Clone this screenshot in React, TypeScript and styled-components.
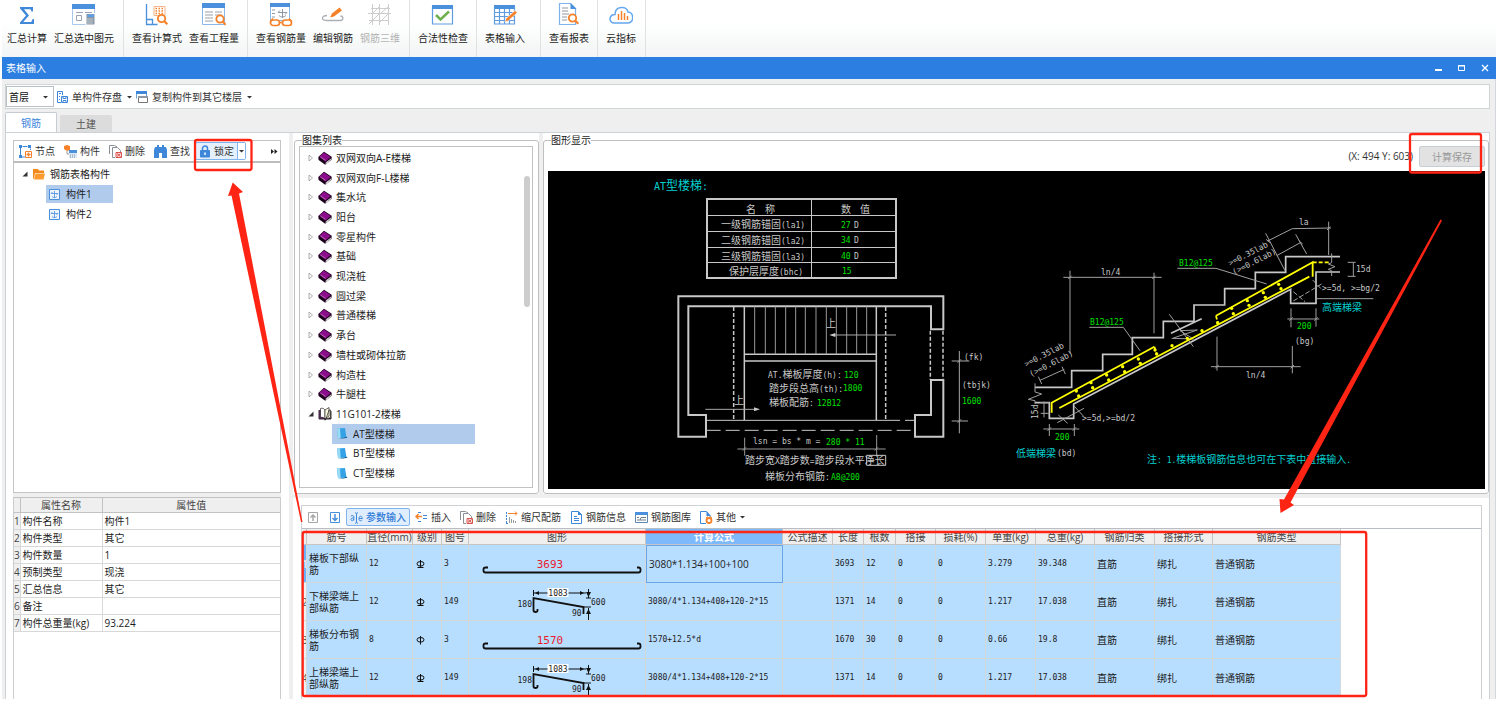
import React from 'react';
import styled, { createGlobalStyle } from 'styled-components';

const GlobalStyle = createGlobalStyle`
  * { box-sizing: border-box; }
  body {
    margin: 0;
    background: #fff;
    color: #1c1c1c;
    font: 10px/14px "Open Sans", "Noto Sans CJK SC", sans-serif;
  }
  button, select { font: inherit; color: inherit; }
  svg { display: block; flex: none; }
`;

const BLUE = '#4a90dc';
const ORANGE = '#f5822a';
const RED = '#ff2414';

const Page_ = styled.div`
  position: relative;
  padding-left: 2px;
`;

/* ---------- ribbon ---------- */
const Ribbon = styled.div`
  display: flex;
  height: 57px;
  background: linear-gradient(#fff 40%, #f2f5f5);
`;
const RibbonGroup = styled.div<{ $start?: number; $end?: number }>`
  display: flex;
  gap: 7px;
  padding: 3px ${p => p.$end ?? 8}px 0 ${p => p.$start ?? 8}px;
  border-right: 1px solid #dfe2e2;
`;
const RibbonButton = styled.button`
  display: flex;
  flex-direction: column;
  align-items: center;
  gap: 4px;
  padding: 0;
  border: 0;
  background: none;
  line-height: 14px;
  color: #1c1c1c;
  white-space: nowrap;
  &:disabled { color: #b4b4b4; }
`;

/* ---------- window ---------- */
const TitleBar = styled.header`
  display: flex;
  align-items: center;
  justify-content: space-between;
  height: 22px;
  padding: 0 4px;
  background: #2c7ee0;
  color: #fff;
`;
const WindowButtons = styled.div`
  display: flex;
  gap: 8px;
`;
const WindowButton = styled.button`
  padding: 0;
  border: 0;
  background: none;
`;
const Body = styled.main`
  padding: 5px 5px 0 3px;
  background: #efefef;
  border-right: 1px solid #d3d6da;
`;
const TopBar = styled.div`
  display: flex;
  align-items: center;
  gap: 3px;
  height: 25px;
  background: #fff;
  border: 1px solid #cfd4d4;
`;
const SelectBox = styled.label`
  display: flex;
  align-items: center;
  height: 21px;
  width: 48px;
  padding-right: 4px;
  border: 1px solid #b9bfc4;
  background: #fff;
`;
const Select = styled.select`
  flex: 1;
  min-width: 0;
  appearance: none;
  border: 0;
  background: none;
  padding: 0 0 0 2px;
  outline: 0;
  color: #111;
`;
const MenuButton = styled.button`
  display: flex;
  align-items: center;
  gap: 4px;
  padding: 0;
  border: 0;
  background: none;
  color: #333;
`;

const Tabs = styled.div`
  display: flex;
  align-items: flex-end;
  gap: 3px;
  padding-top: 3px;
`;
const Tab = styled.button<{ $active?: boolean }>`
  width: 52px;
  height: ${p => (p.$active ? 20 : 17)}px;
  padding: 0;
  border: ${p => (p.$active ? '1px solid #c6ccd2' : '0')};
  border-bottom: 0;
  border-radius: 2px 2px 0 0;
  background: ${p => (p.$active ? '#fff' : '#dcdcdc')};
  color: ${p => (p.$active ? '#3c86dc' : '#555')};
`;
const TabPanel = styled.section`
  display: flex;
  border: 1px solid #cdd2d6;
  border-bottom: 0;
  background: #fff;
`;

/* ---------- left pane ---------- */
const LeftPane = styled.aside`
  flex: none;
  display: flex;
  flex-direction: column;
  width: 283px;
  padding: 7px 8px 0 7px;
`;
const LeftBar = styled.div`
  display: flex;
  align-items: center;
  gap: 1px;
  height: 23px;
  padding: 0 2px 0 1px;
  border: 1px solid #c4c4c4;
  border-bottom: 2px solid #bdbdbd;
`;
const ToolButton = styled.button<{ $active?: boolean }>`
  display: flex;
  align-items: center;
  gap: 3px;
  height: 18px;
  padding: 0 3px;
  border: 1px solid ${p => (p.$active ? '#7fb4f0' : 'transparent')};
  border-radius: 2px;
  background: ${p => (p.$active ? '#dfedfc' : 'none')};
  color: ${p => (p.$active ? '#2f7bd8' : '#333')};
  font-weight: ${p => (p.$active ? 500 : 400)};
  white-space: nowrap;
`;
const SplitButton = styled.div`
  display: flex;
  align-items: stretch;
  height: 18px;
  border: 1px solid #7fb4f0;
  border-radius: 2px;
  background: #e4f0fd;
`;
const SplitMain = styled.button`
  display: flex;
  align-items: center;
  gap: 3px;
  padding: 0 3px;
  border: 0;
  background: none;
  color: #333;
`;
const SplitArrow = styled.button`
  display: flex;
  align-items: center;
  padding: 0;
  border: 0;
  border-left: 1px solid #7fb4f0;
  background: #fff;
`;
const More = styled.button`
  margin-left: auto;
  padding: 0;
  border: 0;
  background: none;
`;
const ComponentTree = styled.ul`
  height: 330px;
  margin: 0;
  padding: 1px 0 0;
  list-style: none;
  border: 1px solid #c4c4c4;
  border-top: 0;
`;
const TreeRow = styled.li`
  display: flex;
  align-items: center;
  gap: 5px;
  height: 20px;
  padding-left: 8px;
`;
const TreeLeaf = styled.li`
  display: flex;
  align-items: center;
  height: 20px;
  padding-left: 32px;
`;
const LeafLabel = styled.span<{ $selected?: boolean }>`
  display: flex;
  align-items: center;
  gap: 6px;
  width: 67px;
  height: 18px;
  padding-left: 3px;
  background: ${p => (p.$selected ? '#b1cbed' : 'none')};
`;
const PropertyArea = styled.div`
  flex: 1;
  border: 1px solid #c9cdd0;
  border-width: 0 1px;
`;
const HSplit = styled.div`
  height: 4px;
  flex: none;
  background: #efefef;
`;
const VSplit = styled.div`
  width: 4px;
  flex: none;
  background: #efefef;
`;
const PropertyTable = styled.table`
  width: 100%;
  table-layout: fixed;
  border-collapse: collapse;
  th, td { padding: 0; overflow: hidden; white-space: nowrap; font-weight: 400; border: 1px solid #d8d8d8; }
  tr > :first-child { border-left: 0; }
  tr > :last-child { border-right: 0; }
  thead th { height: 15px; line-height: 13px; background: #efefef; border-color: #c2c2c2; color: #444; }
  tbody th { background: #efefef; color: #444; line-height: 14px; }
  td { height: 17px; padding-left: 2px; line-height: 14px; }
`;

/* ---------- right pane ---------- */
const RightPane = styled.div`
  flex: 1;
  min-width: 0;
  display: flex;
  flex-direction: column;
`;
const Upper = styled.div`
  display: flex;
  padding-left: 1px;
`;
const Group = styled.fieldset<{ $grow?: boolean }>`
  display: flex;
  flex-direction: column;
  flex: ${p => (p.$grow ? '1' : '0 0 245px')};
  min-width: 0;
  margin: 1px 0 0;
  padding: ${p => (p.$grow ? '0 3px 4px 4px' : '0 5px 5px 4px')};
  border: 1px solid #bfbfbf;
  border-radius: 3px;
`;
const Legend = styled.legend`
  margin-left: 3px;
  padding: 0;
  line-height: 12px;
  height: 12px;
`;
const AtlasBox = styled.div`
  flex: 1;
  display: flex;
  justify-content: space-between;
  padding: 1px 2px 4px 8px;
  border: 1px solid #c2c2c2;
`;
const Atlas = styled.ul`
  flex: 1;
  display: grid;
  grid-auto-rows: 1fr;
  margin: 0;
  padding: 0;
  list-style: none;
`;
const AtlasRow = styled.li`
  display: flex;
  align-items: center;
  gap: 4px;
`;
const AtlasLeaf = styled.li<{ $selected?: boolean }>`
  display: flex;
  align-items: center;
  gap: 5px;
  width: 143px;
  margin-left: 24px;
  padding-left: 4px;
  background: ${p => (p.$selected ? '#b1cbed' : 'none')};
`;
const ScrollThumb = styled.div`
  width: 6px;
  height: 131px;
  margin-top: 28px;
  border-radius: 3px;
  background: #cdcdcd;
`;
const DrawingHead = styled.div`
  display: flex;
  justify-content: flex-end;
  align-items: flex-start;
  gap: 6px;
  height: 25px;
  line-height: 21px;
  color: #333;
`;
const SaveButton = styled.button`
  width: 66px;
  height: 21px;
  padding: 0;
  border: 1px solid #c8ced6;
  border-radius: 2px;
  background: #e2e2e2;
  color: #999;
`;
const CanvasArea = styled.div`
  flex: 1;
  overflow: hidden;
  background: #000;
`;
const Cad = styled.svg`
  path { vector-effect: non-scaling-stroke; fill: none; }
  text { font: 10px "Noto Sans CJK SC", sans-serif; white-space: pre; }
  .mono { font: 8px "DejaVu Sans Mono", monospace; }
  .head { font-size: 12px; }
  .head .mono { font-size: 10px; }
`;

const Lower = styled.section`
  padding: 7px 7px 0 8px;
`;
const RebarBox = styled.div`
  border: 1px solid #cfd2d4;
  border-bottom: 0;
  padding-bottom: 2px;
`;
const RebarBar = styled.div`
  display: flex;
  align-items: center;
  gap: 1px;
  height: 23px;
  border-bottom: 1px solid #b9bec4;
`;
const RebarTable = styled.table`
  table-layout: fixed;
  width: 1039px;
  border-collapse: separate;
  border-spacing: 0;
  th, td {
    padding: 0 0 0 2px;
    overflow: hidden;
    text-align: left;
    border: 0 solid #d3d8dc;
    border-width: 0 1px 1px 0;
    font-weight: 400;
  }
  thead th {
    height: 16px;
    padding: 1px 0 0;
    line-height: 14px;
    text-align: center;
    white-space: nowrap;
    background: #efefef;
    border-color: #c6c6c6;
    color: #444;
  }
  tbody tr { height: 38px; background: #b7ddff; }
`;
const RowHead = styled.th<{ $active?: boolean }>`
  && {
    padding: 0;
    background: ${p => (p.$active ? '#6fb0fa' : '#efefef')};
    color: ${p => (p.$active ? '#fff' : '#555')};
  }
`;
const ActiveHead = styled.th`
  && { background: #7db9fb; color: #fff; font-weight: 700; }
`;
const NumCell = styled.td`
  font: 8px/14px "DejaVu Sans Mono", monospace;
  white-space: nowrap;
`;
const NameCell = styled.td`
  line-height: 12px;
`;
const EditCell = styled.td`
  && { border: 1px solid #6aa5e8; }
`;
const ShapeCell = styled.td`
  && { padding: 0; }
`;
const Shape = styled.svg`
  text { font: 8px "DejaVu Sans Mono", monospace; fill: #222; }
  .len { font: 11px "DejaVu Sans Mono", monospace; fill: #e8202c; }
`;
const Annotations = styled.svg`
  position: absolute;
  top: 0;
  left: 0;
  pointer-events: none;
`;

/* ---------- icons ---------- */
const Arrow = () => (
  <svg width="7" height="8" viewBox="0 0 7 8"><path d="M1 3h5L3.500 5.500z" fill="#333" /></svg>
);

const Magnifier = ({ x = 0, y = 0 }) => (
  <g transform={`translate(${x} ${y})`} stroke={ORANGE} fill="#fff">
    <circle cx="4.500" cy="4.500" r="3.700" strokeWidth="1.800" />
    <path d="M7.300 7.300l3 3" strokeWidth="2.200" />
  </g>
);

const ribbonIcons: Record<string, React.ReactNode> = {
  sum: <path d="M5 4h13v4.500h-1.500l-1-2.300H9l5 6.200-5.800 6.500h8l1.500-3H19V21H5v-1.600l6-7-6-7z" fill="#4288d8" />,
  sumSel: (
    <g fill="none" stroke="#9aa5b1">
      <path d="M.5 6v15.500h22V6" fill="#fff" stroke="#a9c8ec" />
      <path d="M0 1h23v5H0z" fill={BLUE} stroke="none" />
      <path d="M4.500 12.500h5v5h-5zM4 9.500h7M13 9.500h7" />
      <path d="M14 10.500h9V22h-9z" fill="#8996a5" stroke="#fff" />
      <path d="M15.500 11.500h6.500v2.500h-6.500z" fill="#5aa0e8" stroke="none" />
      <path d="M15.500 16h6M15.500 18h6M15.500 20h6" stroke="#fff" strokeDasharray="1 1" />
    </g>
  ),
  viewFormula: (
    <g fill="none">
      <path d="M1.500 1v14.500M1.500 16.500h6v5h-6zM7.500 21.500h5M1.500 15.500v6" stroke={BLUE} strokeWidth="1.300" />
      <path d="M9 3.500h11v9H9z" fill="#fff" stroke="#f6b58a" />
      <path d="M10.500 5.500h9M10.500 8h9M10.500 10.500h9" stroke={ORANGE} strokeWidth="1.400" strokeDasharray="1.500 1.500" />
      <Magnifier x={12} y={11} />
    </g>
  ),
  viewQty: (
    <g fill="none">
      <path d="M.5 3v18.500h22V3" fill="#fff" stroke="#8ab8ea" />
      <path d="M0 0h23v5H0z" fill={BLUE} />
      <path d="M3 9h8M3 12h8M3 15h8M3 18h8M13 9h7M13 12h7" stroke="#9ca4ad" strokeWidth="1.200" />
      <Magnifier x={13.500} y={11.500} />
    </g>
  ),
  viewSteel: (
    <g fill="none">
      <path d="M1.500 3v14.500h19V3" fill="#fff" stroke="#8ab8ea" />
      <path d="M1 0h20v4H1z" fill={BLUE} />
      <path d="M3 7h3M3 10.500h3M3 14h3M9 9.500h9M9 9.500l2-2M18 9.500l-2 2M13.500 6v9M10 12.500c1 2 5 2 7 0" stroke="#8d98a4" />
      <path d="M1 18.500l3-3M23 18.500l-3-3M10.500 19.500h3" stroke={ORANGE} strokeWidth="1.400" />
      <rect x="1.500" y="17" width="9" height="5.500" rx="2.700" fill="#fff" stroke={ORANGE} strokeWidth="1.700" />
      <rect x="13.500" y="17" width="9" height="5.500" rx="2.700" fill="#fff" stroke={ORANGE} strokeWidth="1.700" />
    </g>
  ),
  editSteel: (
    <g fill="none">
      <path d="M6 12.500c-6 0-6 5 0 5h13c4 0 3.500-4.500.5-4.500" stroke="#aab0b6" strokeWidth="1.300" />
      <path d="M9 14.500l2-4 7.500-6 2.500 3-8 6z" fill={ORANGE} />
    </g>
  ),
  steel3d: (
    <path d="M0 10.500h23M4.500 1v21M11.500 1v21M20.500 1v21M1 17.500h20M3 5.500h19M1 21l10-10M12 19l8-8M5 10l7-7M13 10l8-7" fill="none" stroke="#cdcdcd" />
  ),
  check: (
    <g fill="none">
      <path d="M1.500 4v17h20V4" fill="#fff" stroke="#5f9de0" strokeWidth="1.200" />
      <path d="M1 2h21v4H1z" fill={BLUE} />
      <path d="M5 12l4.500 4.500 8.500-8" stroke="#6db150" strokeWidth="2.500" />
    </g>
  ),
  table: (
    <g fill="none">
      <path d="M1 2h21v4H1z" fill={BLUE} />
      <path d="M1.500 4v17h20V4M1 9.500h21M1 13.500h21M1 17.500h21M6.500 6v15M11.500 6v15M16.500 6v15" stroke="#5f9de0" strokeWidth="1.200" />
      <path d="M12 19l1-3.500 9-8 2.300 2.300-9 8z" fill={ORANGE} stroke="#fff" strokeWidth=".6" />
    </g>
  ),
  report: (
    <g fill="none">
      <path d="M2.500.5h11l5 5v16h-16z" fill="#fff" stroke="#7fb1ea" strokeWidth="1.200" />
      <path d="M13.500 0v6h6z" fill={BLUE} />
      <path d="M5 5h6M5 8h6M5 11h7M5 14h5M5 17h5" stroke="#8d98a4" />
      <Magnifier x={11} y={10.500} />
    </g>
  ),
  cloud: (
    <g fill="none">
      <path d="M5.500 20c-6.500 0-5.500-8.500.5-8.500 0-9 12-9 13-2.500 6 0 6.500 11 0 11z" stroke="#62a7ef" strokeWidth="1.500" />
      <path d="M9.500 17v-6M12.500 17V8M15.500 17v-7M18.500 17v-4" stroke={ORANGE} strokeWidth="1.500" />
    </g>
  ),
};

const small: Record<string, React.ReactNode> = {
  node: (
    <g fill="none" stroke="#3f87d8">
      <path d="M1.500 10v-7M3.500 1.500h5M11.500 3.500V5M3 12h3" />
      <path d="M0 0h3v3H0zM9 0h3v3H9zM0 10h3v3H0z" fill="#3f87d8" stroke="none" />
      <path d="M6.500 6.500h6v6h-6z" stroke={ORANGE} fill="#fff" /><path d="M9.500 7.500v4M7.500 9.500h4" stroke={ORANGE} strokeWidth="1.400" />
    </g>
  ),
  comp: (
    <g>
      <path d="M3 0l3 1v4L3 6 0 4V1z" fill={ORANGE} />
      <path d="M3 6v3h2" fill="none" stroke="#999" />
      <path d="M5 5h8v8H5z" fill="#dbe8f8" /><path d="M5 5h8v3H5z" fill={BLUE} />
      <path d="M6 10h6M6 12h6" stroke="#7f8fa0" strokeDasharray="1 1" />
    </g>
  ),
  del: (
    <g fill="none" stroke="#8b9096">
      <path d="M.5 9V.5h5L8 2" /><path d="M6 12.500H3.500v-10h5l3 3V7" />
      <path d="M7 7.500h5.500v5H7z" fill="#fbdcdc" stroke="#d9534f" /><path d="M8 8.500l3.500 3M11.500 8.500l-3.500 3" stroke="#d9534f" />
    </g>
  ),
  find: (
    <path d="M3 0h2v2h3V0h2v2h2l1 3v8H8V8H5v5H0V5l1-3h2z" fill="#3f87d8" />
  ),
  up: <g fill="none" stroke="#a7a7a7"><path d="M2.500 1.500h9v10h-9z" /><path d="M7 10V4M4.500 6.500L7 4l2.500 2.500" strokeWidth="1.500" /></g>,
  down: <g fill="none" stroke="#4a8fdc"><path d="M2.500 1.500h9v10h-9z" /><path d="M7 3v6M4.500 7L7 9.500 9.500 7" strokeWidth="1.500" /></g>,
  param: (
    <g fill="none" stroke="#3f87d8">
      <path d="M.8 5c2.500-1 3 0 3 1v3.500M3.800 7c-3-.5-4 2.500-1.500 2.500L3.800 8.500M9 7.500h3.300c0-3-3.300-3-3.300 0s2 2.500 3.200 1.500" />
      <path d="M5 1.500l1.500 1L8 1.500M6.500 2.500v9M5 12.500l1.500-1 1.500 1" />
    </g>
  ),
  insert: (
    <g fill="none" stroke="#3f87d8">
      <path d="M1 5.500h6M3.500 3L1 5.500 3.500 8" stroke={ORANGE} strokeWidth="1.500" />
      <path d="M3 1.500h3M3 10.500h3M8 4.500h4M8 7.500h4" />
    </g>
  ),
  scale: (
    <g fill="none">
      <path d="M1.500 1v11.500M1 12.500h3" stroke="#3f87d8" strokeDasharray="2 1" /><path d="M3 2.500h9M10 .5l2 2-2 2" stroke={ORANGE} />
      <path d="M4.500 6v6M6.500 8v4M8.500 9v3M10.500 10v2" stroke="#999" />
    </g>
  ),
  info: (
    <g fill="none"><path d="M1.500.5h7l3 3v9h-10z" fill="#fff" stroke="#3f87d8" /><path d="M8 0v4h4z" fill="#3f87d8" /><path d="M4 5.500h3M4 7.500h5M4 9.500h5" stroke="#3f87d8" /></g>
  ),
  lib: (
    <g fill="none"><path d="M.5 1.500h12v10H.5z" fill="#fff" stroke="#5b87b5" /><path d="M0 1h13v3H0z" fill={BLUE} /><path d="M2 6.500h2M2 9h9M6 6.500h5M6 6.500L5 9" stroke="#6c7a88" /></g>
  ),
  other: (
    <g fill="none"><path d="M6 12.500H.5V.5h6l3.500 4v2" stroke="#3f87d8" /><path d="M6.500 0v5h4z" fill="#3f87d8" /><circle cx="9" cy="9.500" r="2.500" stroke={ORANGE} strokeWidth="1.800" /><path d="M6 7l2-1.500M12 7l-2-1.500" stroke={ORANGE} /></g>
  ),
};
const Small = ({ name }: { name: string }) => (
  <svg width="13" height="13" viewBox="0 0 13 13">{small[name]}</svg>
);

const SaveIcon = () => (
  <svg width="11" height="12" viewBox="0 0 11 12" fill="none" stroke="#3f87d8">
    <path d="M4 11.500H.5V.5h5V4M2 2.500h2M2 5.500h1M2 8.500h1M4.500 5.500h6v6h-6zM6 5.500v2h3v-2M6 11.500v-2h3v2" />
  </svg>
);
const CopyIcon = () => (
  <svg width="12" height="12" viewBox="0 0 12 12" fill="none">
    <path d="M.5 7.500V1h10v4" stroke="#6c9fd8" /><path d="M0 0h11v3H0z" fill="#3f87d8" />
    <path d="M2.500 5.500h9v6h-9z" fill="#fff" stroke="#777" /><path d="M2 5h10v2H2z" fill="#8e99a5" />
  </svg>
);
const Lock = () => (
  <svg width="12" height="13" viewBox="0 0 12 13">
    <path d="M3.500 6V3.500a2.500 2.500 0 015 0V6" fill="none" stroke="#3f87d8" strokeWidth="1.500" />
    <rect x="1" y="5" width="10" height="7.500" rx="1" fill="#3f87d8" /><path d="M6 7.500v2.500" stroke="#fff" strokeWidth="1.500" />
  </svg>
);
const Folder = () => (
  <svg width="12" height="11" viewBox="0 0 12 11">
    <path d="M0 0h5l1 1.500h5V4H2L1 9.500H0z" fill="#f08a1c" /><path d="M2.500 4.500H12l-1.500 6H1z" fill="#ff9a2e" />
  </svg>
);
const CompIcon = () => (
  <svg width="11" height="11" viewBox="0 0 11 11" fill="none" stroke="#4a8fdc">
    <path d="M.5.5h10v10H.5z" fill="#eef5fd" /><path d="M2 4.500h7M2 4.500l1.500-1.500M9 4.500L7.500 6M5.500 2v7M3 7.500c1.500 1.500 3.500 1.500 5 0" strokeWidth=".8" />
  </svg>
);
const Closed = () => (
  <svg width="6" height="8" viewBox="0 0 6 8"><path d="M1 1l3.500 3L1 7z" fill="#fff" stroke="#999" strokeWidth=".8" /></svg>
);
const Opened = () => (
  <svg width="6" height="8" viewBox="0 0 6 8"><path d="M5.500 1.500v5h-5z" fill="#333" /></svg>
);
const Book = () => (
  <svg width="14" height="14" viewBox="0 0 14 14">
    <path d="M.3 6L6 .8l7.700 5-.3 3.200-6.200 4.700L.6 9z" fill="#1a001a" />
    <path d="M1.200 5.800L6 1.600l6.700 4.500-5.200 4.400z" fill="#8b0d8b" />
    <path d="M7.600 12l5.400-4M7.600 12.900l5-3.700" stroke="#fff" strokeWidth=".8" />
    <path d="M2.500 6L7.500 9.400" stroke="#d9a0d9" strokeWidth=".6" />
  </svg>
);
const OpenBook = () => (
  <svg width="14" height="14" viewBox="0 0 14 14">
    <path d="M1 3v9h4.500l1.500 1 1.500-1H13V4" fill="#6b1a6b" stroke="#333" />
    <path d="M2.500 1.500c2-.8 3.500 0 4.500 1.500v9C6 10.500 4.500 10 2.500 10.500z" fill="#fff" stroke="#222" strokeWidth=".7" />
    <path d="M7 3l4-2.500v8.500L7 12zM11 3h1.500v7.500L8 12z" fill="#fdfbe0" stroke="#222" strokeWidth=".7" />
  </svg>
);
const Page = () => (
  <svg width="12" height="13" viewBox="0 0 12 13">
    <path d="M1 1.500L9 1l1.500 9.500-8.500.7z" fill="#35a2e6" /><path d="M1 1.500L4 1.300l.6 9.700-2.600.2z" fill="#9bdcf5" />
    <path d="M2.500 12.300l9-1.600-1-1z" fill="#0d5f9c" />
  </svg>
);

const GradeSign = ({ base }: { base?: boolean }) => (
  <svg width="10" height="10" viewBox="0 0 10 10" fill="none" stroke="#111">
    <ellipse cx="5.500" cy="4.800" rx="3.500" ry="2.300" /><path d={base ? 'M5.500 1v8M2.500 8.500h6' : 'M5.500 1v8.500'} />
  </svg>
);

/* ---------- stair drawing ---------- */
const GREEN = '#00e000';
const CYAN = '#00d0d0';
const GRAY = '#c8c8c8';

/* CJK runs keep the 10px face; latin runs use the narrow mono face. */
const T = ({ x, y, c = GRAY, rot, head, children }: { x: number; y: number; c?: string; rot?: number; head?: boolean; children: string }) => (
  <text x={x} y={y} fill={c} transform={rot ? `rotate(${rot} ${x} ${y})` : undefined} className={head ? 'head' : undefined}>
    {children.split(/([\x20-\x7e]+)/).filter(Boolean).map((run, i) => (
      <tspan key={i} className={/[\x20-\x7e]/.test(run) ? 'mono' : undefined}>{run}</tspan>
    ))}
  </text>
);

const treads = [284, 316, 346, 377, 407, 436, 468, 499, 529, 560, 590, 620];
const bars = [
  [229, 573], [236, 588], [273, 548], [278, 563], [320, 525], [326, 540], [368, 500], [374, 515], [415, 477], [421, 490],
  [465, 450], [470, 462], [516, 437], [562, 415], [606, 392], [653, 368], [695, 325], [700, 341], [742, 302], [747, 316],
  [790, 278], [796, 292], [836, 253], [843, 266],
];

const StairDrawing = () => (
  <Cad width="937" height="318" viewBox="548 171 937 318" role="img" aria-label="AT型楼梯">
    {/* anchorage table */}
    <path d="M707 199h189v79H707z" stroke={GRAY} strokeWidth="2" />
    <path d="M707.500 215.500h188M707.500 231.500h188M707.500 247.500h188M707.500 262.500h188M811.500 199v79" stroke={GRAY} />
    <T x={654} y={190} c={CYAN} head>AT型楼梯:</T>
    <T x={746} y={212.500}>名</T><T x={765} y={212.500}>称</T><T x={841} y={212.500}>数</T><T x={860} y={212.500}>值</T>
    <T x={721} y={228}>一级钢筋锚固(la1)</T><T x={721} y={244}>二级钢筋锚固(la2)</T>
    <T x={721} y={260}>三级钢筋锚固(la3)</T><T x={729} y={275}>保护层厚度(bhc)</T>
    <T x={841} y={228} c={GREEN}>27</T><T x={841} y={243} c={GREEN}>34</T><T x={841} y={259} c={GREEN}>40</T><T x={842} y={274} c={GREEN}>15</T>
    <T x={854} y={228}>D</T><T x={854} y={243}>D</T><T x={854} y={259}>D</T>

    {/* plan */}
    <g transform="translate(660 285) scale(.33333)" stroke={GRAY}>
      <path d="M55 34H850V133H813V64H85V390H138V455H55zM813 285H850V455H765V390H813z" strokeWidth="2" />
      <path d="M811 137V285M849 137V285M221 66V405M677 66V405" strokeWidth="1.500" strokeDasharray="4 2" />
      <path d="M253 64V405M649 64V405M253 208H649M253 228H649" strokeWidth="1.500" />
      <path d={treads.map(x => `M${x} 64V207`).join('')} stroke="#989898" />
      <path d="M140 406H720M735 406H765" /><path d="M140 436H765" strokeDasharray="14 5" />
      <path d="M232 492H677M254 458V512M650 450V515M248 497l10-10M644 497l10-10" stroke="#989898" />
      <path d="M708 150H520M136 373H290M898 198V445M875 228H928M875 408H924M893 233l10-10M893 413l10-10" stroke="#a8a8a8" />
      <path d="M508 150l18-6v12zM300 373l-18-6v12z" style={{ fill: GRAY }} stroke="none" />
      <path d="M620 511H677V541H620z" />
    </g>
    <T x={826} y={327}>上</T><T x={734} y={404}>上</T>
    <T x={964} y={360}>(fk)</T><T x={962} y={388}>(tbjk)</T><T x={962} y={404} c={GREEN}>1600</T>
    <T x={768} y={378}>AT.梯板厚度(h):</T><T x={844} y={378} c={GREEN}>120</T>
    <T x={769} y={392}>踏步段总高(th):</T><T x={843} y={391} c={GREEN}>1800</T>
    <T x={769} y={406}>梯板配筋:</T><T x={817} y={406} c={GREEN}>12B12</T>
    <T x={753} y={444}>lsn = bs * m =</T><T x={826} y={445} c={GREEN}>280 * 11</T>
    <T x={745} y={464}>踏步宽X踏步数=踏步段水平净长</T>
    <T x={765} y={480}>梯板分布钢筋:</T><T x={831} y={480} c={GREEN}>A8@200</T>

    {/* section */}
    <g transform="translate(1000 200) scale(.33333)" stroke={GRAY}>
      <path
        d="M105 562H215V512H308V463H397V413H490V364H582V315H674V266H766V217H857V170H1020M105 608H148V655H221V612L872 268V310H948V216H1020"
        strokeWidth="1.700"
      />
      <g stroke="#a0a0a0">
        <path d="M190 232H485M210 212V460M462 218V400M205 237l10-10M457 237l10-10" />
        <path d="M633 500H902M651 410V512M877 438V520M646 505l10-10M872 505l10-10" />
        <path d="M803 123L877 86 993 84M986 65V165M797 100L855 212M830 167L903 127M887 103L920 162M981 90l10-10M798 118l12 10M896 122l12 10" />
        <path d="M532 205H648L800 252M268 382H370L420 452" />
        <path d="M862 357H958M873 325V382M948 325V380M868 362l10-10M943 362l10-10" />
        <path d="M130 687H238M148 672V708M223 672V708M143 692l10-10M218 692l10-10" />
        <path d="M1060 187V229M1043 187H1067M1043 229H1067M948 296H1120" />
        <path d="M995 160V188L985 192 1005 200 985 208 995 212V228" />
        <path d="M105 550V576L125 582 85 598 105 602V612M132 605V652M120 608H148M122 640H148" />
        <path d="M880 303L968 250M880 275L915 305M938 240L965 268" strokeDasharray="5 2" />
        <path d="M172 668L252 625M175 645L203 670M222 618L250 648" />
        <path d="M120 541L193 508M115 530l10 22M186 500l10 22" />
        <path d="M508 343L580 440M515 415L580 417 540 392 592 390 520 414" />
      </g>
      <path d="M513 400L605 356" strokeWidth="1.700" />
      <g stroke="#ff0" strokeWidth="1.800">
        <path d="M155 638V608L463 440M178 624L928 230M648 347L938 187V230" />
        <path d="M938 187H990M463 440L470 462M648 347L653 368" strokeDasharray="4 2" />
      </g>
      <g fill="#ff0" stroke="none">{bars.map(([x, y]) => <circle key={`${x}-${y}`} cx={x} cy={y} r="5" />)}</g>
    </g>
    <T x={1101} y={275}>ln/4</T><T x={1246} y={378}>ln/4</T><T x={1299} y={225}>la</T>
    <T x={1179} y={266} c={GREEN}>B12@125</T><T x={1090} y={325} c={GREEN}>B12@125</T>
    <T x={1230} y={266} rot={-27}>{'>=0.35lab'}</T><T x={1234} y={275} rot={-27}>{'(>=0.6lab)'}</T>
    <T x={1026} y={367} rot={-27}>{'>=0.35lab'}</T><T x={1031} y={377} rot={-27}>{'(>=0.6lab)'}</T>
    <T x={1356} y={272}>15d</T><T x={1322} y={291}>{'>=5d, >=bg/2'}</T>
    <T x={1322} y={311} c={CYAN}>高端梯梁</T>
    <T x={1297} y={329} c={GREEN}>200</T><T x={1295} y={344}>(bg)</T>
    <T x={1038} y={419} rot={-90}>15d</T><T x={1082} y={421}>{'>=5d,>=bd/2'}</T>
    <T x={1055} y={440} c={GREEN}>200</T>
    <T x={1016} y={457} c={CYAN}>低端梯梁</T><T x={1057} y={456}>(bd)</T>
    <T x={1147} y={463} c={CYAN}>注: 1.楼梯板钢筋信息也可在下表中直接输入.</T>
  </Cad>
);

/* ---------- rebar shapes ---------- */
const StraightBar = ({ len }: { len: string }) => (
  <Shape width="176" height="37" viewBox="0 0 176 37">
    <path d="M19 22.500h-2.500q-2 0-2 2v1q0 2 2 2h153q2 0 2-2v-1q0-2-2-2H168" fill="none" stroke="#111" strokeWidth="1.800" />
    <text className="len" x="81" y="23" textAnchor="middle">{len}</text>
  </Shape>
);
const BentBar = ({ side }: { side: string }) => (
  <Shape width="176" height="37" viewBox="0 0 176 37">
    <g fill="none" stroke="#111">
      <path d="M68.500 26v1.500q0 1.500-2 1.500t-2-2V15l50 9v7" strokeWidth="1.800" />
      <path d="M64.500 7v6M65 10h14M99 10h18M119.500 6v9M117 15h5M115 24h7M119.500 25v12" />
    </g>
    <path d="M66 10l4-2v4zM115 10l-4-2v4zM119.500 14l-2.500-5h5zM119.500 26l-2.500 5h5z" fill="#111" />
    <path d="M78.500 5h21v9h-21z" fill="#fff" />
    <text x="89" y="13" textAnchor="middle">1083</text>
    <text x="63" y="24" textAnchor="end">{side}</text>
    <text x="122" y="22">600</text>
    <text x="103" y="33">90</text>
  </Shape>
);

/* ---------- data ---------- */
const ribbon: { end?: number; start?: number; items: { icon: string; label: string; off?: boolean }[] }[] = [
  { start: 5, end: 9, items: [{ icon: 'sum', label: '汇总计算' }, { icon: 'sumSel', label: '汇总选中图元' }] },
  { items: [{ icon: 'viewFormula', label: '查看计算式' }, { icon: 'viewQty', label: '查看工程量' }] },
  { end: 9, items: [{ icon: 'viewSteel', label: '查看钢筋量' }, { icon: 'editSteel', label: '编辑钢筋' }, { icon: 'steel3d', label: '钢筋三维', off: true }] },
  { items: [{ icon: 'check', label: '合法性检查' }] },
  { end: 15, items: [{ icon: 'table', label: '表格输入' }] },
  { items: [{ icon: 'report', label: '查看报表' }] },
  { end: 9, items: [{ icon: 'cloud', label: '云指标' }] },
];

const leftTools = [['node', '节点'], ['comp', '构件'], ['del', '删除'], ['find', '查找']];
const rebarTools = [
  ['insert', '插入'], ['del', '删除'], ['scale', '缩尺配筋'], ['info', '钢筋信息'], ['lib', '钢筋图库'], ['other', '其他'],
];
const properties = [
  ['构件名称', '构件1'], ['构件类型', '其它'], ['构件数量', '1'], ['预制类型', '现浇'],
  ['汇总信息', '其它'], ['备注', ''], ['构件总重量(kg)', '93.224'],
];
const atlas = [
  '双网双向A-E楼梯', '双网双向F-L楼梯', '集水坑', '阳台', '零星构件', '基础', '现浇桩', '圆过梁', '普通楼梯', '承台',
  '墙柱或砌体拉筋', '构造柱', '牛腿柱',
];
const columns: [string, number][] = [
  ['筋号', 60], ['直径(mm)', 46], ['级别', 29], ['图号', 27], ['图形', 177], ['计算公式', 137], ['公式描述', 50], ['长度', 31],
  ['根数', 32], ['搭接', 40], ['损耗(%)', 50], ['单重(kg)', 50], ['总重(kg)', 59], ['钢筋归类', 60], ['搭接形式', 58], ['钢筋类型', 128],
];
const rebars = [
  { name: '梯板下部纵筋', dia: '12', base: true, no: '3', shape: <StraightBar len="3693" />, formula: '3080*1.134+100+100', rest: ['3693', '12', '0', '0', '3.279', '39.348'] },
  { name: '下梯梁端上部纵筋', dia: '12', base: true, no: '149', shape: <BentBar side="180" />, formula: '3080/4*1.134+408+120-2*15', rest: ['1371', '14', '0', '0', '1.217', '17.038'] },
  { name: '梯板分布钢筋', dia: '8', base: false, no: '3', shape: <StraightBar len="1570" />, formula: '1570+12.5*d', rest: ['1670', '30', '0', '0', '0.66', '19.8'] },
  { name: '上梯梁端上部纵筋', dia: '12', base: true, no: '149', shape: <BentBar side="198" />, formula: '3080/4*1.134+408+120-2*15', rest: ['1371', '14', '0', '0', '1.217', '17.038'] },
];

export default function App() {
  return (
    <Page_>
      <GlobalStyle />
      <Ribbon>
        {ribbon.map((g, i) => (
          <RibbonGroup key={i} $start={g.start} $end={g.end}>
            {g.items.map(it => (
              <RibbonButton key={it.label} disabled={it.off}>
                <svg width="24" height="24" viewBox="0 0 24 24">{ribbonIcons[it.icon]}</svg>
                {it.label}
              </RibbonButton>
            ))}
          </RibbonGroup>
        ))}
      </Ribbon>

      <TitleBar>
        表格输入
        <WindowButtons>
          <WindowButton aria-label="最小化"><svg width="15" height="12" viewBox="0 0 15 12"><path d="M4 7h7v2H4z" fill="#fff" /></svg></WindowButton>
          <WindowButton aria-label="最大化"><svg width="15" height="12" viewBox="0 0 15 12"><path d="M4.500 4h6v4.500h-6zM4 3.500h7" fill="none" stroke="#fff" /></svg></WindowButton>
          <WindowButton aria-label="关闭"><svg width="15" height="12" viewBox="0 0 15 12"><path d="M5 3l6 6M11 3L5 9" stroke="#fff" strokeWidth="1.300" /></svg></WindowButton>
        </WindowButtons>
      </TitleBar>

      <Body>
        <TopBar>
          <SelectBox>
            <Select aria-label="楼层" defaultValue="首层"><option>首层</option></Select>
            <Arrow />
          </SelectBox>
          <MenuButton><SaveIcon />单构件存盘<Arrow /></MenuButton>
          <MenuButton><CopyIcon />复制构件到其它楼层<Arrow /></MenuButton>
        </TopBar>

        <Tabs role="tablist">
          <Tab role="tab" aria-selected $active>钢筋</Tab>
          <Tab role="tab" aria-selected={false}>土建</Tab>
        </Tabs>

        <TabPanel role="tabpanel">
          <LeftPane>
            <LeftBar>
              {leftTools.map(([icon, label]) => (
                <ToolButton key={label}><Small name={icon} />{label}</ToolButton>
              ))}
              <SplitButton>
                <SplitMain><Lock />锁定</SplitMain>
                <SplitArrow aria-label="锁定选项"><Arrow /></SplitArrow>
              </SplitButton>
              <More aria-label="更多">
                <svg width="7" height="7" viewBox="0 0 7 7"><path d="M0 1l3 2.500L0 6zM3.500 1l3 2.500-3 2.500z" fill="#222" /></svg>
              </More>
            </LeftBar>
            <ComponentTree>
              <TreeRow><Opened /><Folder />钢筋表格构件</TreeRow>
              <TreeLeaf><LeafLabel $selected><CompIcon />构件1</LeafLabel></TreeLeaf>
              <TreeLeaf><LeafLabel><CompIcon />构件2</LeafLabel></TreeLeaf>
            </ComponentTree>
            <HSplit />
            <PropertyArea>
              <PropertyTable>
                <colgroup><col width="6" /><col width="82" /><col /></colgroup>
                <thead><tr><th /><th>属性名称</th><th>属性值</th></tr></thead>
                <tbody>
                  {properties.map(([k, v], i) => (
                    <tr key={k}><th>{i + 1}</th><td>{k}</td><td>{v}</td></tr>
                  ))}
                </tbody>
              </PropertyTable>
            </PropertyArea>
          </LeftPane>
          <VSplit />

          <RightPane>
            <Upper>
              <Group>
                <Legend>图集列表</Legend>
                <AtlasBox>
                  <Atlas>
                    {atlas.map(name => <AtlasRow key={name}><Closed /><Book />{name}</AtlasRow>)}
                    <AtlasRow><Opened /><OpenBook />11G101-2楼梯</AtlasRow>
                    <AtlasLeaf $selected><Page />AT型楼梯</AtlasLeaf>
                    <AtlasLeaf><Page />BT型楼梯</AtlasLeaf>
                    <AtlasLeaf><Page />CT型楼梯</AtlasLeaf>
                  </Atlas>
                  <ScrollThumb />
                </AtlasBox>
              </Group>
              <VSplit />
              <Group $grow>
                <Legend>图形显示</Legend>
                <DrawingHead>
                  <span>(X: 494 Y: 603)</span>
                  <SaveButton disabled>计算保存</SaveButton>
                </DrawingHead>
                <CanvasArea><StairDrawing /></CanvasArea>
              </Group>
            </Upper>
            <HSplit />
            <Lower>
              <RebarBox>
                <RebarBar>
                  <ToolButton aria-label="上移"><Small name="up" /></ToolButton>
                  <ToolButton aria-label="下移"><Small name="down" /></ToolButton>
                  <ToolButton $active><Small name="param" />参数输入</ToolButton>
                  {rebarTools.map(([icon, label]) => (
                    <ToolButton key={label}><Small name={icon} />{label}{icon === 'other' && <Arrow />}</ToolButton>
                  ))}
                </RebarBar>
                <RebarTable>
                  <colgroup>
                    <col style={{ width: 5 }} />
                    {columns.map(([name, w]) => <col key={name} style={{ width: w }} />)}
                  </colgroup>
                  <thead>
                    <tr>
                      <th />
                      {columns.map(([name]) => (name === '计算公式' ? <ActiveHead key={name}>{name}</ActiveHead> : <th key={name}>{name}</th>))}
                    </tr>
                  </thead>
                  <tbody>
                    {rebars.map((r, i) => (
                      <tr key={r.name}>
                        <RowHead $active={i === 0}>{i + 1}</RowHead>
                        <NameCell>{r.name}</NameCell>
                        <NumCell>{r.dia}</NumCell>
                        <td><GradeSign base={r.base} /></td>
                        <NumCell>{r.no}</NumCell>
                        <ShapeCell>{r.shape}</ShapeCell>
                        {i === 0 ? <EditCell>{r.formula}</EditCell> : <NumCell>{r.formula}</NumCell>}
                        <td />
                        {r.rest.map((v, k) => <NumCell key={k}>{v}</NumCell>)}
                        <td>直筋</td>
                        <td>绑扎</td>
                        <td>普通钢筋</td>
                      </tr>
                    ))}
                  </tbody>
                </RebarTable>
              </RebarBox>
            </Lower>
          </RightPane>
        </TabPanel>
      </Body>

      <Annotations width="1496" height="699" viewBox="0 0 1496 699" aria-hidden="true">
        <g fill="none" stroke={RED} strokeWidth="2.300">
          <rect x="195" y="140" width="56.500" height="30" rx="2" />
          <rect x="1410" y="134" width="71" height="38.500" rx="2" />
          <rect x="302.700" y="532" width="1063.500" height="164" rx="2" />
        </g>
        <g fill={RED}>
          <path d="M302.500 522h-1.500L231.500 195.500l-3.500.5 4.700-13.500 10.300 9.500-4 1.500z" />
          <path d="M1440.500 219.500l1.500 1L1290.500 502.500l3.500 2.500-13.500 8-1-14 4.500.5z" />
        </g>
      </Annotations>
    </Page_>
  );
}
